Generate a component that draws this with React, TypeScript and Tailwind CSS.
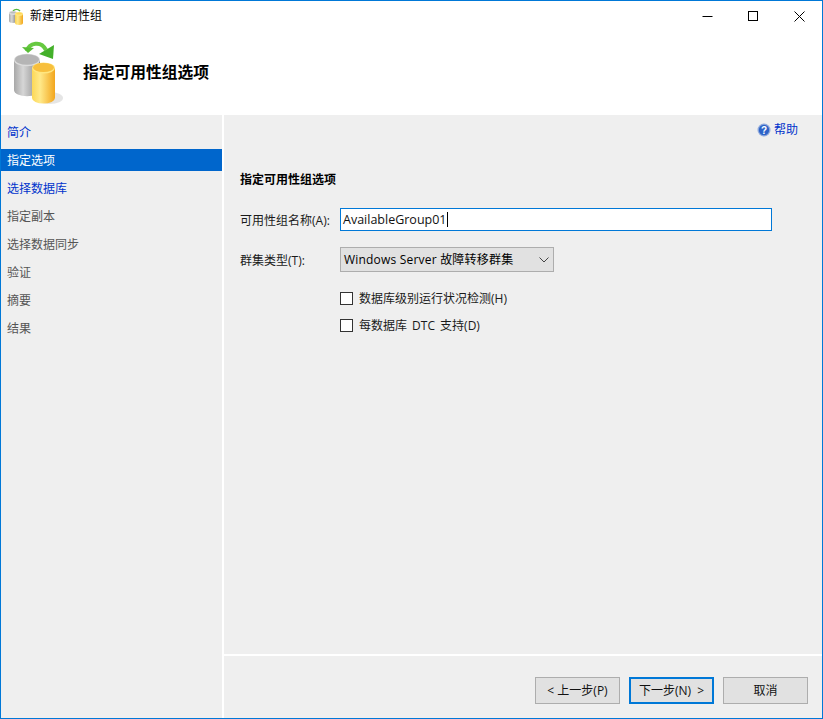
const cjk = "font-['Open_Sans','Noto_Sans_CJK_SC',sans-serif]";

const steps = [
  { label: "简介", state: "link" },
  { label: "指定选项", state: "active" },
  { label: "选择数据库", state: "link" },
  { label: "指定副本", state: "off" },
  { label: "选择数据同步", state: "off" },
  { label: "验证", state: "off" },
  { label: "摘要", state: "off" },
  { label: "结果", state: "off" },
];

function Cylinder({ id, x, y, w, h, light, mid, dark, top, rim }: { id: string; x: number; y: number; w: number; h: number; light: string; mid: string; dark: string; top: string; rim: string }) {
  const ry = w * 0.24;
  return (
    <g>
      <defs>
        <linearGradient id={id} x1="0" x2="1" y1="0" y2="0">
          <stop offset="0" stopColor={mid} />
          <stop offset="0.35" stopColor={light} />
          <stop offset="1" stopColor={dark} />
        </linearGradient>
      </defs>
      <path
        d={`M${x} ${y} V${y + h} A${w / 2} ${ry} 0 0 0 ${x + w} ${y + h} V${y} Z`}
        fill={`url(#${id})`}
      />
      <ellipse cx={x + w / 2} cy={y} rx={w / 2} ry={ry} fill={rim} />
      <ellipse cx={x + w / 2} cy={y - 0.5} rx={w / 2 - 1} ry={ry - 1} fill={top} />
    </g>
  );
}

function DbIcon() {
  return (
    <svg width="50" height="66" viewBox="0 0 50 66">
      <ellipse cx="36" cy="58" rx="13" ry="6" fill="#d4d4d4" opacity="0.6" />
      <path d="M13 11 C15 3 27 0 32 10" fill="none" stroke="#66c940" strokeWidth="4" />
      <path d="M8 7 L20 8 L14 13 Z" fill="#58bd35" />
      <path d="M40 5 L39 19 L25 14 Z" fill="#43b02a" />
      <Cylinder id="gray" x={0} y={20} w={26} h={30} light="#d6d6d6" mid="#a8a8a8" dark="#858585" top="#b5b5b5" rim="#dcdcdc" />
      <Cylinder id="gold" x={18} y={28} w={23} h={30} light="#ffe98a" mid="#fcd856" dark="#f2a61d" top="#f7bf3d" rim="#ffe680" />
    </svg>
  );
}

function SmallDbIcon() {
  return (
    <svg width="15" height="17" viewBox="0 0 15 17">
      <path d="M4 3 C6 1 9 1 11 3" fill="none" stroke="#54b93a" strokeWidth="1.5" />
      <Cylinder id="sgray" x={0} y={5} w={8} h={8} light="#d6d6d6" mid="#a8a8a8" dark="#777777" top="#bdbdbd" rim="#dcdcdc" />
      <Cylinder id="sgold" x={6} y={6} w={8} h={9} light="#ffe98a" mid="#fbd24e" dark="#f2a61d" top="#ffd75a" rim="#ffe680" />
    </svg>
  );
}

function HelpIcon() {
  return (
    <svg width="14" height="14" viewBox="0 0 14 14">
      <circle cx="7" cy="7" r="6.5" fill="#8fa9dc" />
      <circle cx="7" cy="7" r="5.2" fill="#2d63c8" />
      <text x="7" y="10.5" textAnchor="middle" fontSize="10" fontWeight="700" fill="#ffffff" fontFamily="Liberation Sans, sans-serif">?</text>
    </svg>
  );
}

function Check({ label }: { label: string }) {
  return (
    <div className="flex items-center h-[14px]">
      <div className="w-[13px] h-[13px] border border-[#333333] bg-white" />
      <span className="ml-[6px] pt-[2px] text-[#1a1a1a] [word-spacing:2px]">{label}</span>
    </div>
  );
}

export default function App() {
  return (
    <div className={`${cjk} w-[823px] h-[719px] border border-[#0078d7] bg-white flex flex-col text-[12px] leading-[16px] text-black`}>
      {/* title bar */}
      <div className="h-[30px] flex items-center pl-[8px]">
        <SmallDbIcon />
        <span className="ml-[6px]">新建可用性组</span>
        <div className="ml-auto flex items-center">
          <svg width="11" height="11" viewBox="0 0 11 11" className="mr-[35px]">
            <path d="M0.5 5.5 H10.5" stroke="#000" />
          </svg>
          <svg width="11" height="11" viewBox="0 0 11 11" className="mr-[35px]">
            <rect x="0.5" y="0.5" width="9" height="9" fill="none" stroke="#000" />
          </svg>
          <svg width="11" height="11" viewBox="0 0 11 11" className="mr-[17px]">
            <path d="M0.5 0.5 L10.5 10.5 M10.5 0.5 L0.5 10.5" stroke="#000" />
          </svg>
        </div>
      </div>

      {/* header */}
      <div className="h-[84px] flex items-center pl-[13px]">
        <DbIcon />
        <h1 className="ml-[19px] text-[15.75px] font-bold font-['Noto_Sans_CJK_SC',sans-serif] mt-[-2px]">指定可用性组选项</h1>
      </div>

      <div className="flex-1 flex min-h-0">
        {/* steps */}
        <nav className="w-[221px] bg-[#efefef] pt-[6px] flex flex-col gap-[6px]">
          {steps.map((s) => (
            <div
              key={s.label}
              className={
                s.state === "active"
                  ? "h-[22px] pl-[6px] pt-[2px] flex items-center bg-[#0066cc] text-white"
                  : s.state === "link"
                    ? "h-[22px] pl-[6px] pt-[2px] flex items-center text-[#0033cc]"
                    : "h-[22px] pl-[6px] pt-[2px] flex items-center text-[#555555]"
              }
            >
              {s.label}
            </div>
          ))}
        </nav>

        {/* main */}
        <div className="ml-[2px] flex-1 bg-[#efefef] flex flex-col">
          <div className="flex-1 pl-[16px] pt-[7px]">
            <div className="flex items-center justify-end pr-[24px] h-[16px] text-[#0033cc]">
              <HelpIcon />
              <span className="ml-[3px]">帮助</span>
            </div>
            <div className="mt-[34px] font-bold">指定可用性组选项</div>
            <div className="mt-[20px] flex items-center">
              <label className="w-[100px] pt-[2px] text-[#1a1a1a]">可用性组名称(A):</label>
              <div className="w-[432px] h-[23px] border border-[#0078d7] bg-white flex items-center pl-[2px] text-[12.5px] text-[#111111]">
                AvailableGroup01
                <span className="w-px h-[15px] bg-black" />
              </div>
            </div>
            <div className="mt-[16px] flex items-center">
              <label className="w-[100px] pt-[2px] text-[#1a1a1a]">群集类型(T):</label>
              <div className="w-[214px] h-[25px] border border-[#adadad] bg-[#e1e1e1] flex items-center pl-[3px] pr-[3px] tracking-[0.2px]">
                Windows Server 故障转移群集
                <svg width="10" height="6" viewBox="0 0 10 6" className="ml-auto mr-[1px]">
                  <path d="M0.5 0.5 L5 5 L9.5 0.5" fill="none" stroke="#444444" />
                </svg>
              </div>
            </div>
            <div className="mt-[19px] ml-[100px] flex flex-col gap-[13px]">
              <Check label="数据库级别运行状况检测(H)" />
              <Check label="每数据库 DTC 支持(D)" />
            </div>
          </div>

          {/* footer */}
          <div className="h-[64px] border-t-2 border-white flex items-start justify-end pt-[21px] pr-[14px] gap-[9px] text-[#111111]">
            <button className="w-[85px] h-[27px] border border-[#adadad] bg-[#e1e1e1]">&lt; 上一步(P)</button>
            <button className="w-[85px] h-[27px] border-2 border-[#0078d7] bg-[#e1e1e1]">下一步(N)&nbsp;&nbsp;&gt;</button>
            <button className="w-[85px] h-[27px] border border-[#adadad] bg-[#e1e1e1]">取消</button>
          </div>
        </div>
      </div>
    </div>
  );
}
